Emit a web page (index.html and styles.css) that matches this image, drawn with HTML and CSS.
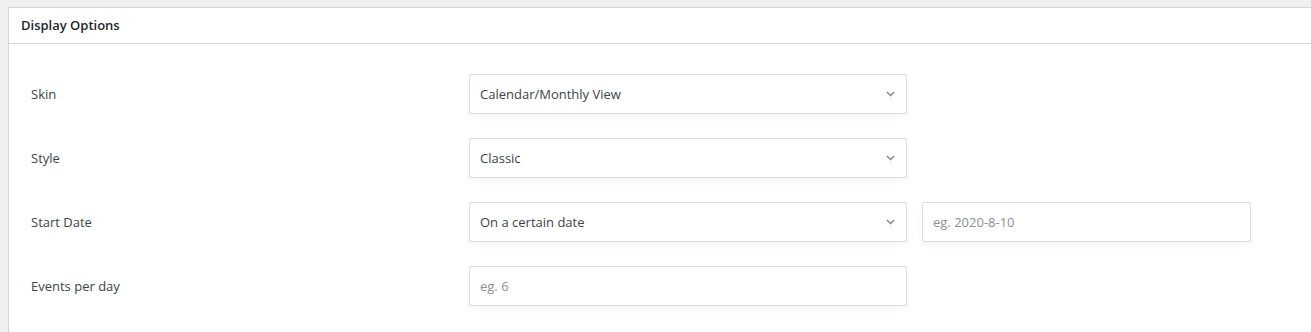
FILE: index.html
```html
<!DOCTYPE html>
<html lang="en">
<head>
  <meta charset="UTF-8">
  <title>Display Options</title>
  <link rel="stylesheet" href="styles.css">
</head>
<body>
  <div class="postbox">
    <h2 class="postbox-title">Display Options</h2>
    <div class="inside">
      <div class="form-row">
        <label class="row-label">Skin</label>
        <div class="fields">
          <div class="select-box">
            <span>Calendar/Monthly View</span>
            <svg class="chevron" width="9" height="6" viewBox="0 0 9 6"><path d="M1 1l3.5 3.5L8 1" fill="none" stroke="#8c8f94" stroke-width="1.6"/></svg>
          </div>
        </div>
      </div>
      <div class="form-row">
        <label class="row-label">Style</label>
        <div class="fields">
          <div class="select-box">
            <span>Classic</span>
            <svg class="chevron" width="9" height="6" viewBox="0 0 9 6"><path d="M1 1l3.5 3.5L8 1" fill="none" stroke="#8c8f94" stroke-width="1.6"/></svg>
          </div>
        </div>
      </div>
      <div class="form-row">
        <label class="row-label">Start Date</label>
        <div class="fields">
          <div class="select-box">
            <span>On a certain date</span>
            <svg class="chevron" width="9" height="6" viewBox="0 0 9 6"><path d="M1 1l3.5 3.5L8 1" fill="none" stroke="#8c8f94" stroke-width="1.6"/></svg>
          </div>
          <input class="text-box date-box" type="text" placeholder="eg. 2020-8-10">
        </div>
      </div>
      <div class="form-row">
        <label class="row-label">Events per day</label>
        <div class="fields">
          <input class="text-box" type="text" placeholder="eg. 6">
        </div>
      </div>
    </div>
  </div>
</body>
</html>
```

FILE: styles.css
```css
body {
  margin: 0;
  padding: 7px 0 0 8px;
  background: #f0f0f1;
  font-family: "Open Sans", "Noto Sans", sans-serif;
  font-size: 13px;
  color: #3c434a;
  overflow: hidden;
}
.postbox {
  box-sizing: border-box;
  background: #fff;
  border: 1px solid #d5d5d5;
  border-right: none;
  border-bottom: none;
  height: calc(100vh - 7px);
}
.postbox-title {
  margin: 0;
  height: 35px;
  line-height: 35px;
  padding: 0 12px;
  font-size: 13px;
  font-weight: 600;
  color: #23282d;
  border-bottom: 1px solid #d5d5d5;
}
.inside {
  padding: 30px 0 0 22px;
}
.form-row {
  display: flex;
  align-items: center;
  height: 40px;
  margin-bottom: 24px;
}
.form-row:last-child {
  margin-bottom: 0;
}
.row-label {
  width: 438px;
  color: #3c434a;
}
.fields {
  display: flex;
  gap: 15px;
}
.select-box,
.text-box {
  box-sizing: border-box;
  width: 438px;
  height: 40px;
  border: 1px solid #dddddd;
  border-radius: 2px;
  background: #fff;
  box-shadow: 0 3px 8px -2px rgba(0, 0, 0, 0.07);
  padding: 0 10px;
  font-family: inherit;
  font-size: 13px;
  color: #3c434a;
}
.select-box {
  display: flex;
  align-items: center;
  justify-content: space-between;
}
.chevron {
  margin-right: 1px;
}
.text-box {
  outline: none;
}
.text-box::placeholder {
  color: #8a8f94;
}
.date-box {
  width: 329px;
}
```
